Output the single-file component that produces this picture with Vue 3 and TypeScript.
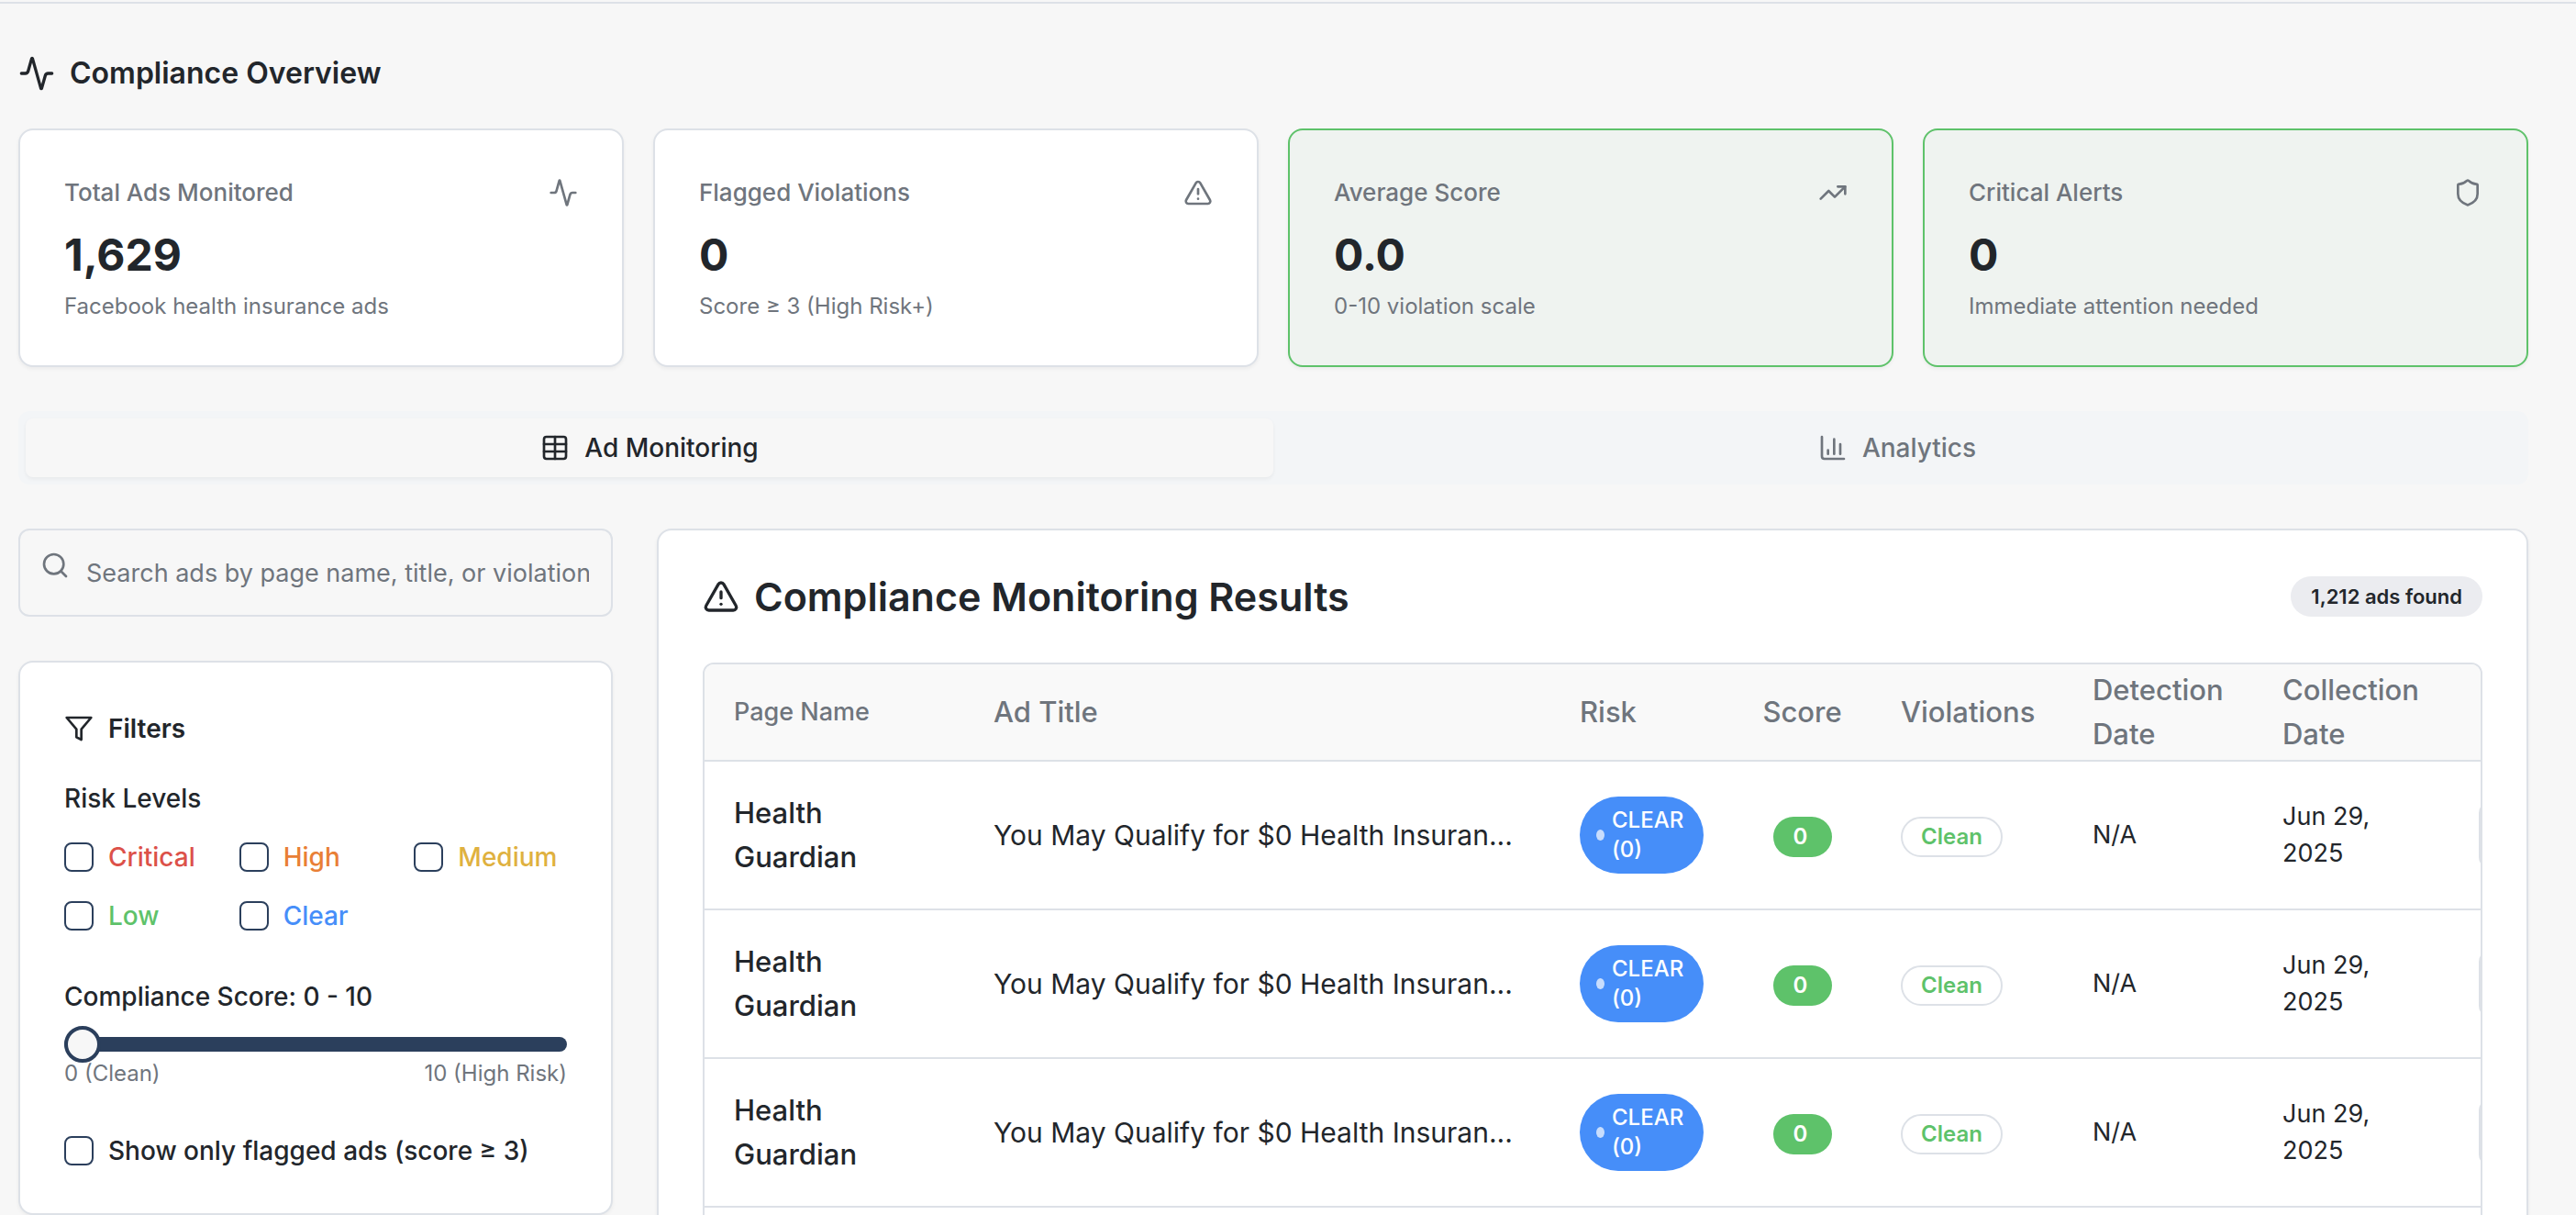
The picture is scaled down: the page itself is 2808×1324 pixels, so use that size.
<script setup lang="ts">
import { ref } from 'vue'

type IconName = 'activity' | 'alert' | 'trend' | 'shield'

interface Stat {
  title: string
  value: string
  note: string
  icon: IconName
  good: boolean
}

interface Ad {
  id: number
  page: string
  title: string
  detected: string
  collected: string
}

const iconPaths: Record<IconName, string[]> = {
  activity: [
    'M22 12h-2.48a2 2 0 0 0-1.93 1.46l-2.35 8.36a.25.25 0 0 1-.48 0L9.24 2.18a.25.25 0 0 0-.48 0l-2.35 8.36A2 2 0 0 1 4.49 12H2',
  ],
  alert: [
    'm21.73 18-8-14a2 2 0 0 0-3.48 0l-8 14A2 2 0 0 0 4 21h16a2 2 0 0 0 1.73-3',
    'M12 9v4',
    'M12 17h.01',
  ],
  trend: ['M22 7 13.5 15.5 8.5 10.5 2 17', 'M16 7h6v6'],
  shield: [
    'M20 13c0 5-3.5 7.5-7.66 8.95a1 1 0 0 1-.67-.01C7.5 20.5 4 18 4 13V6a1 1 0 0 1 1-1c2 0 4.5-1.2 6.24-2.72a1.17 1.17 0 0 1 1.52 0C14.51 3.81 17 5 19 5a1 1 0 0 1 1 1z',
  ],
}

const stats: Stat[] = [
  { title: 'Total Ads Monitored', value: '1,629', note: 'Facebook health insurance ads', icon: 'activity', good: false },
  { title: 'Flagged Violations', value: '0', note: 'Score ≥ 3 (High Risk+)', icon: 'alert', good: false },
  { title: 'Average Score', value: '0.0', note: '0-10 violation scale', icon: 'trend', good: true },
  { title: 'Critical Alerts', value: '0', note: 'Immediate attention needed', icon: 'shield', good: true },
]

const levels = ['Critical', 'High', 'Medium', 'Low', 'Clear']
const selected = ref<string[]>([])
const flaggedOnly = ref(false)
const score = ref(0)
const query = ref('')
const tab = ref<'ads' | 'analytics'>('ads')

const ads: Ad[] = Array.from({ length: 3 }, (_, id) => ({
  id,
  page: 'Health Guardian',
  title: 'You May Qualify for $0 Health Insuran...',
  detected: 'N/A',
  collected: 'Jun 29, 2025',
}))
</script>

<template>
  <div class="page">
    <header class="topbar"></header>
    <main class="content">
      <h2 class="overview">
        <svg class="icon icon-lg" viewBox="0 0 24 24"><path :d="iconPaths.activity[0]" /></svg>
        Compliance Overview
      </h2>

      <section class="stats">
        <article v-for="s in stats" :key="s.title" class="card stat" :class="{ good: s.good }">
          <div class="stat-head">
            <h3>{{ s.title }}</h3>
            <svg class="icon" viewBox="0 0 24 24"><path v-for="d in iconPaths[s.icon]" :key="d" :d="d" /></svg>
          </div>
          <p class="stat-value">{{ s.value }}</p>
          <p class="stat-note">{{ s.note }}</p>
        </article>
      </section>

      <div class="tabs" role="tablist">
        <button type="button" role="tab" class="tab" :class="{ active: tab === 'ads' }" :aria-selected="tab === 'ads'" @click="tab = 'ads'">
          <svg class="icon" viewBox="0 0 24 24">
            <path d="M12 3v18" /><rect x="3" y="3" width="18" height="18" rx="2" /><path d="M3 9h18" /><path d="M3 15h18" />
          </svg>
          Ad Monitoring
        </button>
        <button type="button" role="tab" class="tab" :class="{ active: tab === 'analytics' }" :aria-selected="tab === 'analytics'" @click="tab = 'analytics'">
          <svg class="icon" viewBox="0 0 24 24">
            <path d="M3 3v16a2 2 0 0 0 2 2h16" /><path d="M18 17V9" /><path d="M13 17V5" /><path d="M8 17v-3" />
          </svg>
          Analytics
        </button>
      </div>

      <div class="columns">
        <aside class="side">
          <div class="search">
            <svg class="icon search-icon" viewBox="0 0 24 24"><circle cx="11" cy="11" r="8" /><path d="m21 21-4.3-4.3" /></svg>
            <input v-model="query" type="text" aria-label="Search ads" placeholder="Search ads by page name, title, or violations..." />
          </div>

          <section class="card filters">
            <h3 class="filters-title">
              <svg class="icon" viewBox="0 0 24 24"><path d="M22 3 2 3 10 12.46 10 19 14 21 14 12.46 22 3z" /></svg>
              Filters
            </h3>
            <fieldset>
              <legend>Risk Levels</legend>
              <div class="levels">
                <label v-for="l in levels" :key="l" class="check" :class="l.toLowerCase()">
                  <input v-model="selected" type="checkbox" :value="l" />{{ l }}
                </label>
              </div>
            </fieldset>
            <label class="score-label" for="score">Compliance Score: {{ score }} - 10</label>
            <input id="score" v-model.number="score" class="slider" type="range" min="0" max="10" />
            <div class="scale"><span>0 (Clean)</span><span>10 (High Risk)</span></div>
            <label class="check">
              <input v-model="flaggedOnly" type="checkbox" />Show only flagged ads (score ≥ 3)
            </label>
          </section>
        </aside>

        <section class="card results">
          <div class="results-head">
            <h2>
              <svg class="icon icon-lg" viewBox="0 0 24 24"><path v-for="d in iconPaths.alert" :key="d" :d="d" /></svg>
              Compliance Monitoring Results
            </h2>
            <span class="badge count">1,212 ads found</span>
          </div>
          <div class="table-wrap">
            <table>
              <colgroup>
                <col class="c-page" /><col /><col class="c-risk" /><col class="c-score" />
                <col class="c-viol" /><col class="c-detect" /><col class="c-collect" /><col class="c-act" />
              </colgroup>
              <thead>
                <tr>
                  <th class="small">Page Name</th>
                  <th>Ad Title</th>
                  <th>Risk</th>
                  <th class="center">Score</th>
                  <th>Violations</th>
                  <th>Detection Date</th>
                  <th>Collection Date</th>
                  <th></th>
                </tr>
              </thead>
              <tbody>
                <tr v-for="ad in ads" :key="ad.id">
                  <td class="name">{{ ad.page }}</td>
                  <td class="title">{{ ad.title }}</td>
                  <td><span class="risk"><i></i><span>CLEAR (0)</span></span></td>
                  <td class="center"><span class="badge score">0</span></td>
                  <td><span class="badge clean">Clean</span></td>
                  <td class="small">{{ ad.detected }}</td>
                  <td class="small">{{ ad.collected }}</td>
                  <td><button type="button" class="view" aria-label="View ad"></button></td>
                </tr>
              </tbody>
            </table>
          </div>
        </section>
      </div>
    </main>
  </div>
</template>

<style>
body {
  background: #f7f7f7;
}
</style>

<style scoped>
.page {
  --ink: #22262b;
  --muted: #6f757d;
  --line: #dde1e7;
  --navy: #2b3f5c;
  --green: #5ec26a;
  --blue: #468ef9;
  height: 100vh;
  overflow: hidden;
  box-sizing: border-box;
  background: #f7f7f7;
  color: var(--ink);
  font-family: Inter, 'Liberation Sans', sans-serif;
  font-size: 28px;
  line-height: 40px;
}
.page *,
.page *::before {
  box-sizing: border-box;
}
h2,
h3,
p,
fieldset,
legend {
  margin: 0;
  padding: 0;
  border: 0;
}
.topbar {
  height: 4px;
  border-bottom: 2px solid var(--line);
}
.content {
  padding: 56px 52px 0 20px;
}
.icon {
  flex: none;
  width: 32px;
  height: 32px;
  fill: none;
  stroke: currentColor;
  stroke-width: 2;
  stroke-linecap: round;
  stroke-linejoin: round;
}
.icon-lg {
  width: 40px;
  height: 40px;
}
.overview {
  display: flex;
  align-items: center;
  gap: 16px;
  margin-bottom: 40px;
  font-size: 32px;
  font-weight: 600;
}
.card {
  border: 2px solid var(--line);
  border-radius: 16px;
  background: #fff;
  padding: 48px;
  box-shadow: 0 2px 4px rgba(0, 0, 0, 0.05);
}
.stats {
  display: grid;
  grid-template-columns: repeat(4, 1fr);
  gap: 32px;
}
.stat.good {
  border-color: var(--green);
  background: #eff3f0;
}
.stat-head {
  display: flex;
  align-items: center;
  justify-content: space-between;
  margin-bottom: 16px;
  color: var(--muted);
}
.stat-head h3 {
  font-size: 26px;
  font-weight: 500;
}
.stat-value {
  font-size: 48px;
  font-weight: 700;
  line-height: 64px;
}
.stat-note {
  margin-top: 8px;
  color: var(--muted);
  font-size: 24px;
  line-height: 32px;
}
.tabs {
  display: grid;
  grid-template-columns: 1fr 1fr;
  margin: 48px 0;
  padding: 8px;
  border-radius: 12px;
  background: #f3f5f7;
}
.tab {
  display: flex;
  align-items: center;
  justify-content: center;
  gap: 16px;
  height: 64px;
  border: 0;
  border-radius: 8px;
  background: transparent;
  color: var(--muted);
  font: inherit;
  font-weight: 500;
}
.tab.active {
  background: #f7f7f7;
  color: var(--ink);
  box-shadow: 0 2px 4px rgba(0, 0, 0, 0.05);
}
.columns {
  display: grid;
  grid-template-columns: repeat(4, minmax(0, 1fr));
  gap: 48px;
  align-items: start;
}
.side {
  display: grid;
  gap: 48px;
}
.search {
  position: relative;
}
.search-icon {
  position: absolute;
  top: 24px;
  left: 24px;
  color: var(--muted);
}
.search input {
  display: block;
  width: 100%;
  height: 96px;
  padding: 0 24px 0 72px;
  border: 2px solid var(--line);
  border-radius: 12px;
  background: #f7f7f7;
  color: var(--ink);
  font: inherit;
  font-size: 27px;
}
.search input::placeholder {
  color: var(--muted);
}
.filters {
  display: flex;
  flex-direction: column;
  font-weight: 500;
}
.filters-title {
  display: flex;
  align-items: center;
  gap: 16px;
  margin-bottom: 32px;
  font-size: 28px;
  font-weight: 600;
  line-height: 48px;
}
.levels {
  display: grid;
  grid-template-columns: repeat(3, 1fr);
  gap: 24px;
  margin: 24px 0 48px;
}
.check {
  display: flex;
  align-items: center;
  gap: 16px;
}
.check input {
  appearance: none;
  flex: none;
  width: 32px;
  height: 32px;
  margin: 0;
  border: 2px solid var(--navy);
  border-radius: 8px;
  background: #fff;
}
.check input:checked {
  background: var(--navy);
}
.critical {
  color: #dc5149;
}
.high {
  color: #e97f35;
}
.medium {
  color: #dfb13f;
}
.low {
  color: var(--green);
}
.clear {
  color: var(--blue);
}
.slider {
  appearance: none;
  display: block;
  width: 100%;
  height: 16px;
  margin: 24px 0 8px;
  border-radius: 8px;
  background: var(--navy);
}
.slider::-webkit-slider-runnable-track {
  height: 16px;
}
.slider::-webkit-slider-thumb {
  appearance: none;
  width: 40px;
  height: 40px;
  margin-top: -12px;
  border: 4px solid var(--navy);
  border-radius: 50%;
  background: #f7f7f7;
}
.scale {
  display: flex;
  justify-content: space-between;
  margin-bottom: 48px;
  color: var(--muted);
  font-size: 24px;
  font-weight: 400;
  line-height: 32px;
}
.results {
  grid-column: span 3;
}
.results-head {
  display: flex;
  align-items: center;
  justify-content: space-between;
  margin-bottom: 48px;
}
.results-head h2 {
  display: flex;
  align-items: center;
  gap: 16px;
  font-size: 43px;
  font-weight: 600;
  line-height: 48px;
}
.badge {
  display: inline-flex;
  align-items: center;
  height: 44px;
  padding: 0 20px;
  border: 2px solid transparent;
  border-radius: 22px;
  font-size: 24px;
  font-weight: 600;
  line-height: 32px;
  vertical-align: middle;
}
.count {
  background: #ebecf0;
  font-size: 22px;
}
.table-wrap {
  overflow: hidden;
  padding-bottom: 48px;
  border: 2px solid var(--line);
  border-radius: 12px;
}
table {
  width: calc(100% + 160px);
  border-collapse: separate;
  border-spacing: 0;
  table-layout: fixed;
  font-size: 31px;
  line-height: 48px;
}
.c-page {
  width: 283px;
}
.c-risk {
  width: 199px;
}
.c-score {
  width: 151px;
}
.c-viol {
  width: 209px;
}
.c-detect {
  width: 207px;
}
.c-collect {
  width: 214px;
}
.c-act {
  width: 194px;
}
th,
td {
  padding: 0 32px;
  border-bottom: 2px solid var(--line);
  text-align: left;
  vertical-align: middle;
}
th {
  height: 106px;
  background: #f9f9f9;
  color: var(--muted);
  font-weight: 500;
}
td {
  height: 162px;
}
.small {
  font-size: 27px;
  line-height: 40px;
}
.name {
  font-weight: 500;
}
.title {
  font-size: 30px;
  white-space: nowrap;
}
.center {
  padding-right: 0;
  padding-left: 0;
  text-align: center;
}
.risk {
  display: flex;
  align-items: center;
  gap: 8px;
  padding: 10px 18px;
  border-radius: 42px;
  background: var(--blue);
  color: #fff;
  font-size: 24px;
  font-weight: 500;
  line-height: 32px;
}
.risk i {
  flex: none;
  width: 9px;
  height: 12px;
  border-radius: 50%;
  background: #fff;
  opacity: 0.7;
}
.score {
  min-width: 64px;
  background: var(--green);
  color: #fff;
}
.clean {
  border-color: var(--line);
  color: var(--green);
}
.view {
  display: block;
  width: 120px;
  height: 72px;
  border: 2px solid var(--line);
  border-radius: 12px;
  background: #f7f7f7;
}
</style>
